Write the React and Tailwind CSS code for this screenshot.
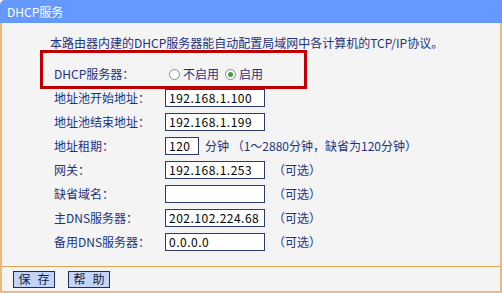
import React from "react";

const FONT = "font-['Noto_Sans_CJK_SC','Liberation_Sans',sans-serif]";

const ROWS = [
  { label: "地址池开始地址：", value: "192.168.1.100" },
  { label: "地址池结束地址：", value: "192.168.1.199" },
  { label: "地址租期：", value: "120", lease: true },
  { label: "网关：", value: "192.168.1.253", optional: true },
  { label: "缺省域名：", value: "", optional: true },
  { label: "主DNS服务器：", value: "202.102.224.68", optional: true },
  { label: "备用DNS服务器：", value: "0.0.0.0", optional: true },
];

function Radio({ checked, label }) {
  return (
    <span className="flex items-center">
      <span className="flex h-[11px] w-[11px] items-center justify-center rounded-full border border-[#7d8ca3] bg-white">
        {checked && <span className="h-[5px] w-[5px] rounded-full bg-[#3ea33e]" />}
      </span>
      <span className="ml-[3px]">{label}</span>
    </span>
  );
}

function Field({ value, w = "w-[100px]" }) {
  return (
    <div className={`flex h-[18px] ${w} items-center border border-[#2b3a66] bg-white pl-[3px] text-[12px] leading-none tracking-[0.5px] text-black`}>
      {value}
    </div>
  );
}

export default function App() {
  return (
    <div className={`relative h-[293px] w-[502px] overflow-hidden bg-[#f4f4f4] text-[12px] text-[#1b3380] ${FONT}`}>
      {/* title bar */}
      <div className="flex h-[23px] items-center rounded-tl-[5px] bg-[#6699ff] pl-[7px] text-[12px] text-white">
        DHCP服务
      </div>

      <div className="flex h-[270px] flex-col border-x-2 border-b-2 border-[#f0b878]">
        <div className="flex h-[39px] items-center pl-[48px] leading-none">
          本路由器内建的DHCP服务器能自动配置局域网中各计算机的TCP/IP协议。
        </div>

        <div className="grid grid-cols-[111px_1fr] pl-[52px]">
          <div className="flex h-[24px] items-center leading-none">DHCP服务器：</div>
          <div className="flex h-[24px] items-center gap-[6px] pl-[4px] leading-none">
            <Radio label="不启用" />
            <Radio checked label="启用" />
          </div>

          {ROWS.map((r) => (
            <React.Fragment key={r.label}>
              <div className="flex h-[24px] items-center leading-none">{r.label}</div>
              <div className="flex h-[24px] items-center leading-none">
                {r.lease ? (
                  <>
                    <Field value={r.value} w="w-[34px]" />
                    <span className="ml-[6px]">分钟 （1～2880分钟，缺省为120分钟）</span>
                  </>
                ) : (
                  <>
                    <Field value={r.value} />
                    {r.optional && <span className="ml-[8px]">（可选）</span>}
                  </>
                )}
              </div>
            </React.Fragment>
          ))}
        </div>

        <div className="mt-auto flex h-[25px] items-center gap-[13px] border-t border-[#e8a34f] pl-[11px]">
          {[["保", "存"], ["帮", "助"]].map(([a, b]) => (
            <button
              key={a}
              className="flex h-[17px] w-[42px] items-center justify-center gap-[7px] border border-[#1f2d5c] bg-[#c4d4f6] text-[12px] leading-none text-[#111b40]"
            >
              <span>{a}</span>
              <span>{b}</span>
            </button>
          ))}
        </div>
      </div>

      {/* annotation */}
      <div className="pointer-events-none absolute left-[40px] top-[50px] h-[39px] w-[267px] border-[3px] border-[#c00000]" />
    </div>
  );
}
